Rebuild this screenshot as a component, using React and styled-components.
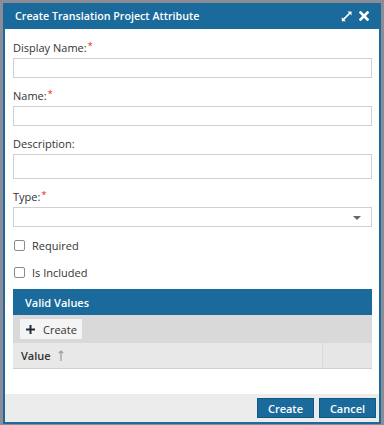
import styled, { createGlobalStyle } from 'styled-components';

const GlobalStyle = createGlobalStyle`
  html, body {
    margin: 0;
    padding: 0;
    background: #8c8c96;
  }
  body {
    font-family: "Open Sans", "Liberation Sans", sans-serif;
    padding: 3px 3px 1px 3px;
  }
`;

const Dialog = styled.div`
  width: 378px;
  height: 421px;
  box-sizing: border-box;
  border: 2px solid #1a6a9c;
  border-top: none;
  display: flex;
  flex-direction: column;
  background: #fff;
`;

const Header = styled.div`
  height: 26px;
  flex: none;
  margin: 0 -2px;
  background: #1a6a9c;
  display: flex;
  align-items: center;
  padding: 0 12px 0 12px;
  color: #fff;
  font-size: 10.7px;
  font-weight: 600;
`;

const Title = styled.div`
  flex: 1;
`;

const HeaderIcons = styled.div`
  display: flex;
  align-items: center;
  gap: 7px;
`;

const Body = styled.div`
  flex: 1;
  padding: 11px 7px 0 8px;
  display: flex;
  flex-direction: column;
`;

const Field = styled.div`
  display: flex;
  flex-direction: column;
  margin-bottom: 10px;
`;

const Label = styled.label`
  font-size: 11px;
  color: #333;
  line-height: 16px;
  margin-bottom: 2px;
`;

const Star = styled.span`
  color: #e11;
  font-size: 9px;
  vertical-align: top;
  margin-left: 1px;
  position: relative;
  top: -2px;
`;

const Input = styled.div`
  height: ${(p) => p.$h || 20}px;
  border: 1px solid #d0d0d0;
  box-sizing: border-box;
  background: #fff;
  position: relative;
`;

const Caret = styled.div`
  position: absolute;
  right: 10px;
  top: 8px;
  width: 0;
  height: 0;
  border-left: 4px solid transparent;
  border-right: 4px solid transparent;
  border-top: 4px solid #666;
`;

const CheckRow = styled.div`
  display: flex;
  align-items: center;
  gap: 7px;
  font-size: 11px;
  color: #333;
  height: 16px;
  margin-bottom: 11px;
  padding-left: 1px;
`;

const Box = styled.span`
  width: 9px;
  height: 9px;
  border: 1px solid #8a8a8a;
  border-radius: 2px;
  background: #fff;
`;

const Grid = styled.div`
  display: flex;
  flex-direction: column;
  margin-top: -2px;
`;

const GridHead = styled.div`
  height: 26px;
  background: #1a6a9c;
  color: #fff;
  font-size: 11px;
  font-weight: 600;
  display: flex;
  align-items: center;
  padding-left: 12px;
`;

const Toolbar = styled.div`
  height: 28px;
  background: #d9d9d9;
  display: flex;
  align-items: center;
  padding-left: 7px;
`;

const ToolButton = styled.div`
  height: 20px;
  width: 62px;
  box-sizing: border-box;
  background: #f4f4f4;
  display: flex;
  align-items: center;
  padding: 0 0 0 6px;
  gap: 8px;
  font-size: 11px;
  color: #333;
`;

const ColumnRow = styled.div`
  height: 25px;
  display: flex;
  background: #e8e8e8;
  border-bottom: 1px solid #d0d0d0;
`;

const Column = styled.div`
  flex: ${(p) => (p.$fill ? 1 : 'none')};
  width: ${(p) => (p.$fill ? 'auto' : '49px')};
  display: flex;
  align-items: center;
  gap: 7px;
  padding-left: ${(p) => (p.$fill ? '8px' : '0')};
  font-size: 11px;
  font-weight: 600;
  color: #333;
  border-left: ${(p) => (p.$fill ? 'none' : '1px solid #dadada')};
  background: ${(p) => (p.$fill ? 'transparent' : '#e6e6e6')};
`;

const Footer = styled.div`
  height: 28px;
  flex: none;
  background: #ececec;
  display: flex;
  align-items: center;
  justify-content: flex-end;
  gap: 5px;
  padding-right: 3px;
`;

const Button = styled.div`
  width: ${(p) => p.$w}px;
  height: 20px;
  background: #1a6a9c;
  border: 1px solid #0f5884;
  box-sizing: border-box;
  color: #fff;
  font-size: 11px;
  font-weight: 600;
  display: flex;
  align-items: center;
  justify-content: center;
`;

const Required = () => <Star>*</Star>;

export default function App() {
  return (
    <>
      <GlobalStyle />
      <Dialog>
        <Header>
          <Title>Create Translation Project Attribute</Title>
          <HeaderIcons>
            <svg width="11" height="11" viewBox="0 0 11 11">
              <path d="M6.5 0.5h4v4l-1.4-1.4-5.7 5.7 1.4 1.4h-4v-4l1.4 1.4 5.7-5.7z" fill="#fff" />
            </svg>
            <svg width="10" height="10" viewBox="0 0 10 10">
              <path d="M1.5 1.5l7 7M8.5 1.5l-7 7" stroke="#fff" strokeWidth="2.6" strokeLinecap="square" />
            </svg>
          </HeaderIcons>
        </Header>
        <Body>
          <Field>
            <Label>Display Name:<Required /></Label>
            <Input />
          </Field>
          <Field>
            <Label>Name:<Required /></Label>
            <Input />
          </Field>
          <Field>
            <Label>Description:</Label>
            <Input $h={25} />
          </Field>
          <Field>
            <Label>Type:<Required /></Label>
            <Input>
              <Caret />
            </Input>
          </Field>
          <CheckRow>
            <Box />
            Required
          </CheckRow>
          <CheckRow>
            <Box />
            Is Included
          </CheckRow>
          <Grid>
            <GridHead>Valid Values</GridHead>
            <Toolbar>
              <ToolButton>
                <svg width="9" height="9" viewBox="0 0 9 9">
                  <path d="M4.5 0v9M0 4.5h9" stroke="#1d2b3a" strokeWidth="2" />
                </svg>
                Create
              </ToolButton>
            </Toolbar>
            <ColumnRow>
              <Column $fill>
                Value
                <svg width="6" height="11" viewBox="0 0 6 11">
                  <path d="M3 1v10M0.8 3.2L3 1l2.2 2.2" stroke="#999" strokeWidth="1.2" fill="none" />
                </svg>
              </Column>
              <Column />
            </ColumnRow>
          </Grid>
        </Body>
        <Footer>
          <Button $w={57}>Create</Button>
          <Button $w={57}>Cancel</Button>
        </Footer>
      </Dialog>
    </>
  );
}
